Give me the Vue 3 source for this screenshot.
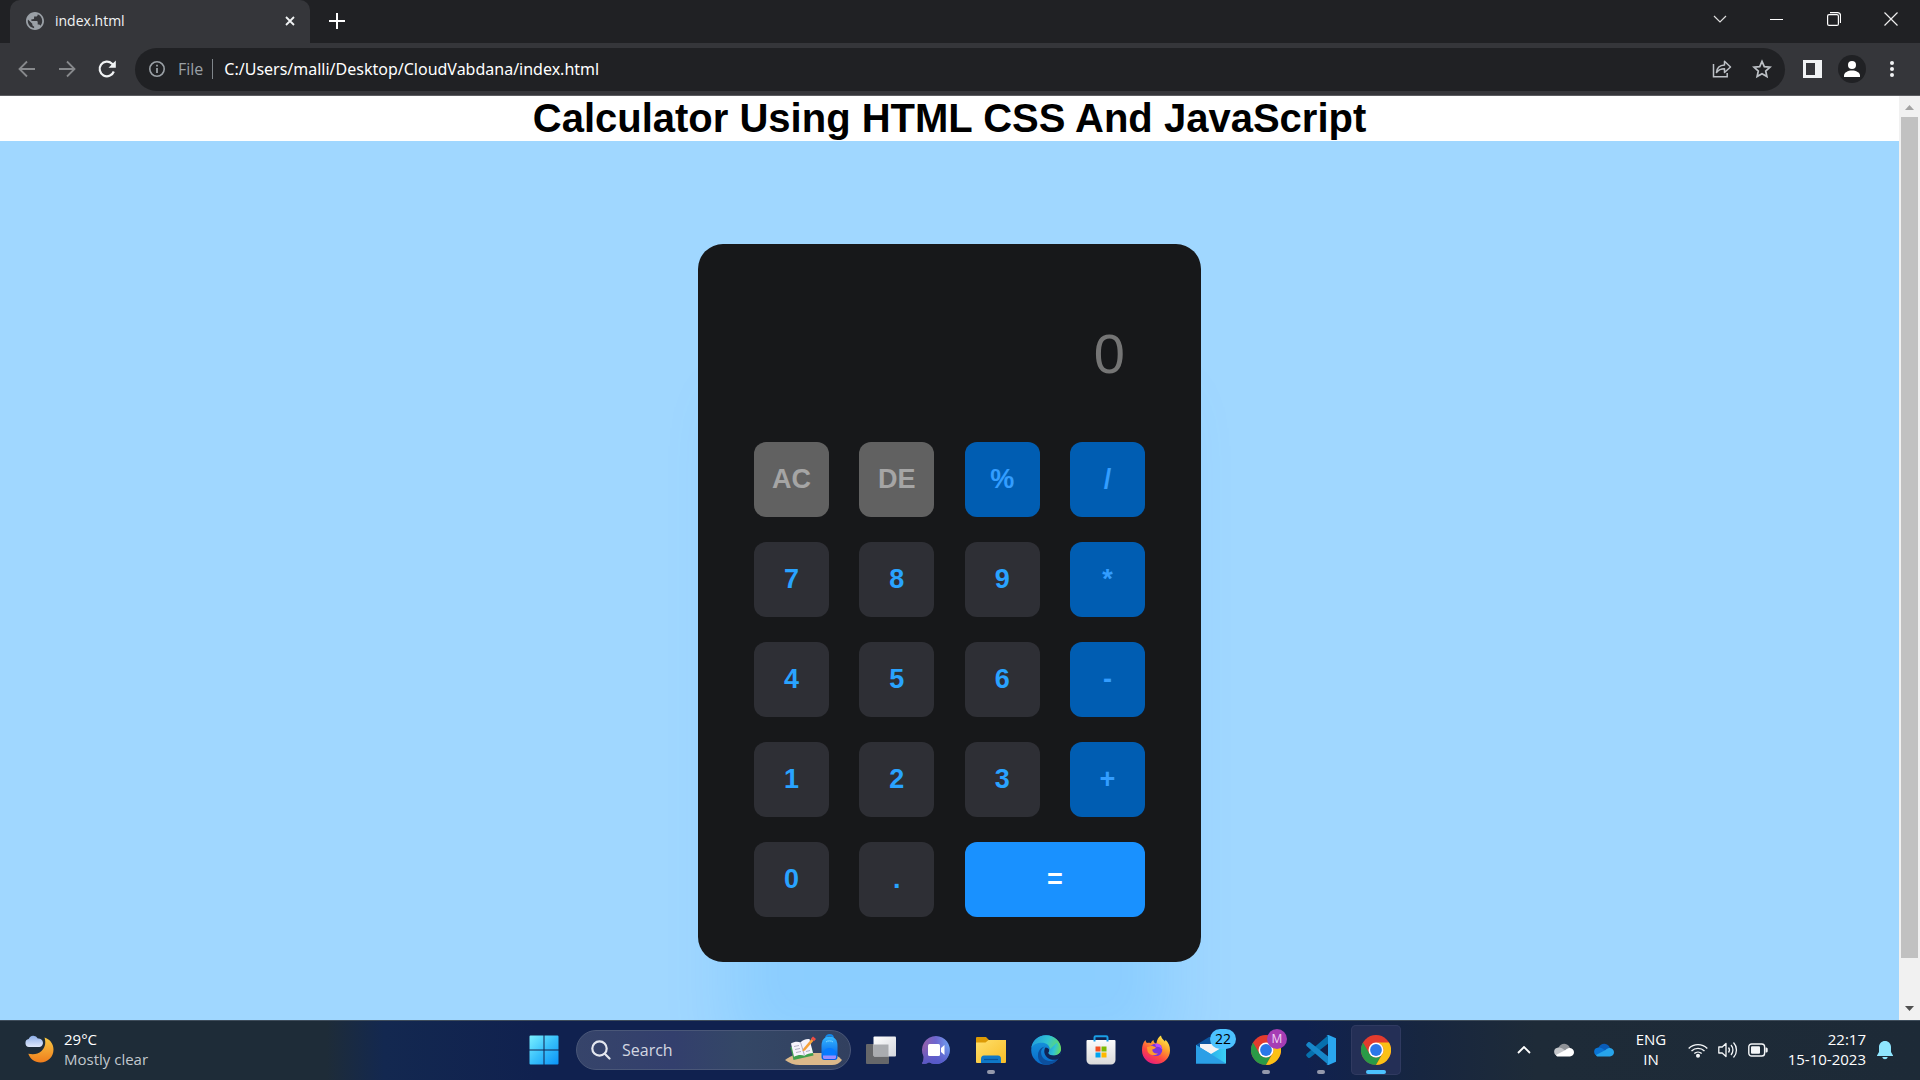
<script setup>
import { ref } from 'vue'

const display = ref('')
const address = ref('C:/Users/malli/Desktop/CloudVabdana/index.html')
const query = ref('')

const keys = [
  { label: 'AC', kind: 'edit' },
  { label: 'DE', kind: 'edit' },
  { label: '%', kind: 'operator' },
  { label: '/', kind: 'operator' },
  { label: '7', kind: 'digit' },
  { label: '8', kind: 'digit' },
  { label: '9', kind: 'digit' },
  { label: '*', kind: 'operator' },
  { label: '4', kind: 'digit' },
  { label: '5', kind: 'digit' },
  { label: '6', kind: 'digit' },
  { label: '-', kind: 'operator' },
  { label: '1', kind: 'digit' },
  { label: '2', kind: 'digit' },
  { label: '3', kind: 'digit' },
  { label: '+', kind: 'operator' },
  { label: '0', kind: 'digit' },
  { label: '.', kind: 'digit' },
  { label: '=', kind: 'equals' },
]

function evaluate(expression) {
  if (!/^[\d.+\-*/% ]+$/.test(expression)) return ''
  try {
    return String(new Function('return ' + expression)())
  } catch {
    return ''
  }
}

function press(label) {
  if (label === 'AC') display.value = ''
  else if (label === 'DE') display.value = display.value.slice(0, -1)
  else if (label === '=') display.value = evaluate(display.value)
  else display.value += label
}
</script>

<template>
  <div class="screen">
    <header class="browser">
      <div class="tabstrip">
        <div class="tab">
          <svg width="18" height="18" viewBox="2 2 20 20">
            <path d="M12 2C6.480 2 2 6.480 2 12s4.480 10 10 10 10-4.480 10-10S17.520 2 12 2zm-1 17.930c-3.950-.490-7-3.850-7-7.930 0-.620.080-1.210.210-1.790L9 15v1c0 1.100.9 2 2 2v1.930zm6.900-2.540c-.260-.810-1-1.390-1.900-1.390h-1v-3c0-.550-.450-1-1-1H8v-2h2c.550 0 1-.450 1-1V7h2c1.100 0 2-.9 2-2v-.410c2.930 1.190 5 4.060 5 7.410 0 2.080-.8 3.970-2.100 5.390z" fill="#9aa0a6" />
          </svg>
          <span class="tab-title">index.html</span>
          <button class="icon tab-close" aria-label="Close tab">
            <svg width="10" height="10" viewBox="0 0 10 10"><path d="M1 1l8 8M9 1L1 9" stroke="#f1f3f4" stroke-width="1.8" /></svg>
          </button>
        </div>
        <button class="icon new-tab" aria-label="New tab">
          <svg width="16" height="16" viewBox="0 0 16 16"><path d="M8 0v16M0 8h16" stroke="#fff" stroke-width="2" /></svg>
        </button>
        <div class="window-controls">
          <button class="icon" aria-label="Search tabs">
            <svg width="14" height="8" viewBox="0 0 14 8"><path d="M1 1l6 6 6-6" fill="none" stroke="#ddd" stroke-width="1.2" /></svg>
          </button>
          <button class="icon" aria-label="Minimize">
            <svg width="14" height="14" viewBox="0 0 14 14"><path d="M0 7.5h13" stroke="#fff" /></svg>
          </button>
          <button class="icon" aria-label="Restore">
            <svg width="14" height="14" viewBox="0 0 14 14" fill="none" stroke="#fff" stroke-width="1.2"><rect x=".6" y="2.6" width="10.8" height="10.8" rx="1.5" /><path d="M3 .6h7.500a3 3 0 0 1 3 3V11" /></svg>
          </button>
          <button class="icon" aria-label="Close window">
            <svg width="14" height="14" viewBox="0 0 14 14"><path d="M.5.5l13 13M13.500.5l-13 13" stroke="#eee" stroke-width="1.2" /></svg>
          </button>
        </div>
      </div>

      <div class="toolbar">
        <button class="icon nav" aria-label="Back">
          <svg width="18" height="18" viewBox="0 0 18 18" fill="none" stroke="#87898c" stroke-width="1.8"><path d="M17 9H2M9 1.500L1.500 9 9 16.500" /></svg>
        </button>
        <button class="icon nav" aria-label="Forward">
          <svg width="18" height="18" viewBox="0 0 18 18" fill="none" stroke="#87898c" stroke-width="1.8"><path d="M1 9h15M9 1.500L16.500 9 9 16.500" /></svg>
        </button>
        <button class="icon nav" aria-label="Reload">
          <svg width="20" height="20" viewBox="0 0 20 20"><path d="M16.800 12.500A7.300 7.300 0 1 1 15 4.700L17.500 7" fill="none" stroke="#f1f3f4" stroke-width="2.2" /><path d="M18.800 1.500v7.300h-7.300z" fill="#f1f3f4" /></svg>
        </button>
        <div class="omnibox">
          <svg width="18" height="18" viewBox="0 0 18 18"><circle cx="9" cy="9" r="7.2" fill="none" stroke="#9aa0a6" stroke-width="1.6" /><path d="M9 8v5M9 4.800v1.800" stroke="#9aa0a6" stroke-width="1.8" /></svg>
          <label class="scheme" for="address">File</label>
          <input id="address" v-model="address" class="address" type="text" spellcheck="false" />
          <button class="icon nav" aria-label="Share">
            <svg width="20" height="20" viewBox="0 0 20 20" fill="none" stroke="#bdc1c6" stroke-width="1.5"><path d="M1.500 5v12.700h13.700V14" /><path d="M4.500 13.500c.4-4.500 3.200-7.300 8-7.500V2.200L18.500 8l-6 5.500V9.800c-3.800 0-6 1-8 3.700z" stroke-linejoin="round" /></svg>
          </button>
          <button class="icon nav" aria-label="Bookmark">
            <svg width="20" height="20" viewBox="0 0 20 20"><path d="M10 2.400l2.300 5.200 5.700.6-4.300 3.800 1.200 5.600L10 14.700l-4.900 2.900L6.300 12 2 8.200l5.700-.6z" fill="none" stroke="#bdc1c6" stroke-width="1.7" /></svg>
          </button>
        </div>
        <button class="icon nav" aria-label="Side panel">
          <svg width="19" height="18" viewBox="0 0 19 18"><path d="M0 0h19v18H0zM3 3v12h9V3z" fill="#f1f3f4" fill-rule="evenodd" /></svg>
        </button>
        <button class="icon nav" aria-label="Profile">
          <svg width="28" height="28" viewBox="0 0 28 28"><circle cx="14" cy="14" r="14" fill="#202124" /><circle cx="14" cy="10" r="4" fill="#fff" /><path d="M6 22v-1.500c0-3 4-5 8-5s8 2 8 5V22z" fill="#fff" /></svg>
        </button>
        <button class="icon nav" aria-label="Menu">
          <svg width="4" height="18" viewBox="0 0 4 18" fill="#f1f3f4"><circle cx="2" cy="3" r="2" /><circle cx="2" cy="9" r="2" /><circle cx="2" cy="15" r="2" /></svg>
        </button>
      </div>
    </header>

    <div class="viewport">
      <main class="page">
        <h1>Calculator Using HTML CSS And JavaScript</h1>
        <section class="stage">
          <form class="calculator" @submit.prevent>
            <input v-model="display" class="display" type="text" placeholder="0" aria-label="Result" />
            <div class="keys">
              <button
                v-for="key in keys"
                :key="key.label"
                type="button"
                class="key"
                :class="key.kind"
                @click="press(key.label)"
              >{{ key.label }}</button>
            </div>
          </form>
        </section>
      </main>
      <div class="scrollbar">
        <svg width="21" height="21" viewBox="0 0 21 21"><path d="M6 14l4.500-5 4.500 5z" fill="#a3a3a3" /></svg>
        <div class="track"><div class="thumb"></div></div>
        <svg width="21" height="21" viewBox="0 0 21 21"><path d="M6 7l4.500 5L15 7z" fill="#505050" /></svg>
      </div>
    </div>

    <footer class="taskbar">
      <button class="weather">
        <svg width="30" height="30" viewBox="0 0 30 30">
          <defs>
            <linearGradient id="moon" x1="0" y1="0" x2="0" y2="1"><stop offset="0" stop-color="#f6c844" /><stop offset="1" stop-color="#f07d1c" /></linearGradient>
            <linearGradient id="cloud" x1="0" y1="0" x2="0" y2="1"><stop offset="0" stop-color="#8fb0ea" /><stop offset="1" stop-color="#dfe8fa" /></linearGradient>
          </defs>
          <path d="M19.500 3.500c5 1.500 9 6 9 12 0 7.500-5.800 13-13 13C9.500 28.500 5 25 3.300 19.800 8 20.800 13 20.500 16.500 17c4-4 4.500-8.500 3-13.500z" fill="url(#moon)" />
          <path d="M4 13a4 4 0 0 1-.3-7.900A5 5 0 0 1 12.800 4.500 4.300 4.300 0 0 1 14.500 13z" fill="url(#cloud)" />
        </svg>
        <span class="two-lines">
          <span>29°C</span>
          <span class="dim">Mostly clear</span>
        </span>
      </button>

      <nav class="apps">
        <button class="app start" aria-label="Start">
          <svg width="30" height="30" viewBox="0 0 30 30">
            <defs><linearGradient id="win" x1="0" y1="0" x2="1" y2="1"><stop offset="0" stop-color="#7bf0ff" /><stop offset=".5" stop-color="#38c0fb" /><stop offset="1" stop-color="#0a93f7" /></linearGradient></defs>
            <path d="M1.500.5H14.500V14.500H.5V1.500a1 1 0 0 1 1-1zM15.500.5H28.500a1 1 0 0 1 1 1V14.500H15.500zM.5 15.500H14.500V29.500H1.500a1 1 0 0 1-1-1zM15.500 15.500H29.500V28.500a1 1 0 0 1-1 1H15.500z" fill="url(#win)" />
          </svg>
        </button>
        <div class="search">
          <svg width="20" height="20" viewBox="0 0 20 20" fill="none" stroke="#e4e7ef" stroke-width="2.2" stroke-linecap="round"><circle cx="8.500" cy="8.500" r="7.2" /><path d="M13.800 13.800l4.700 4.700" /></svg>
          <input v-model="query" type="text" placeholder="Search" aria-label="Search" />
          <svg width="58" height="32" viewBox="0 0 58 32">
            <defs><linearGradient id="bag" x1="0" y1="0" x2="0" y2="1"><stop offset="0" stop-color="#35b7ff" /><stop offset="1" stop-color="#0059e6" /></linearGradient></defs>
            <path d="M0 26C7 21 13 19 23 19h22c5 1 8 3 12 7-2 3-6 5-10 5H15C9 31 4 29 0 26z" fill="#dcb98a" />
            <path d="M5.500 13L8.500 26 28.500 21.500 27 14z" fill="#3fa14d" />
            <path d="M6 9.500c3-2 7-2.500 9.500-1C17.500 6 21 4.500 24.500 5L28 19c-3 0-6 .8-8.500 2.800-3.500-1.300-7-.8-10.500 1z" fill="#f6f3fb" />
            <path d="M15.800 9L19.500 21.500M9 12.500l5-1M10 15.500l5-1M11 18.500l5-1M21 17.500l4-1" stroke="#aaa5bb" stroke-width=".9" />
            <path d="M18 15l8.500-10 2 1.800L20 16.500l-2.500.8z" fill="#f6a13a" /><path d="M26 4.500l2-2 3 2.500-2 2.300z" fill="#f04d43" />
            <path d="M41 4c0-4 7-4 7 0" fill="none" stroke="#1486e8" stroke-width="1.8" />
            <path d="M36.500 12c0-6 3-9.500 8-9.500s8 3.500 8 9.500v11c0 2-1 3-3 3h-10c-2 0-3-1-3-3z" fill="url(#bag)" />
            <path d="M38.500 20c0-4 2.500-6 6-6s6 2 6 6v4h-12z" fill="#087bff" /><path d="M38 21.500h13v2c0 1-1 1.500-2 1.500h-9c-1 0-2-.5-2-1.500z" fill="#9b8dff" />
            <path d="M41 8c1-1.500 6-1.500 7 0" fill="none" stroke="#7bd5ff" />
          </svg>
        </div>
        <button class="app" aria-label="Task view">
          <svg width="30" height="28" viewBox="0 0 30 28">
            <defs><linearGradient id="tv" x1="0" y1="0" x2="1" y2="1"><stop offset="0" stop-color="#fff" /><stop offset="1" stop-color="#d4d6dc" /></linearGradient></defs>
            <rect y="8" width="23" height="20" rx="1" fill="#66676a" /><rect x="7.5" y=".5" width="22.500" height="20" rx="1" fill="url(#tv)" /><path d="M8 8.500h14.500V20H8z" fill="#aaacb0" />
          </svg>
        </button>
        <button class="app" aria-label="Chat">
          <svg width="30" height="30" viewBox="0 0 30 30">
            <defs><linearGradient id="chat" x1="0" y1="0" x2="1" y2="0"><stop offset="0" stop-color="#965fa8" /><stop offset=".5" stop-color="#6d66cf" /><stop offset="1" stop-color="#6fa2f2" /></linearGradient><linearGradient id="chat-low" x1="0" y1="0" x2="0" y2="1"><stop offset=".35" stop-color="#5558c8" stop-opacity="0" /><stop offset="1" stop-color="#5558c8" /></linearGradient></defs>
            <path d="M15 1a14 14 0 1 1-7 26.200C5.500 28.700 3 29 1 28.500c1-1.500 1.800-3.500 1.600-7A14 14 0 0 1 15 1z" fill="url(#chat)" />
            <path d="M15 1a14 14 0 1 1-7 26.200C5.500 28.700 3 29 1 28.500c1-1.500 1.800-3.500 1.600-7A14 14 0 0 1 15 1z" fill="url(#chat-low)" />
            <rect x="7" y="9" width="12" height="12" rx="1.5" fill="#fff" /><path d="M20 13l3.500-3v10L20 17z" fill="#fff" />
          </svg>
        </button>
        <button class="app running" aria-label="File Explorer">
          <svg width="30" height="28" viewBox="0 0 30 28">
            <defs><linearGradient id="folder" x1="0" y1="0" x2="1" y2="1"><stop offset="0" stop-color="#ffdf6b" /><stop offset="1" stop-color="#f8bd27" /></linearGradient></defs>
            <path d="M0 2a1 1 0 0 1 1-1h9l3 3h16a1 1 0 0 1 1 1v8H0z" fill="#dd9a05" /><path d="M0 6.500h9.500l3-2.500H30V26a1 1 0 0 1-1 1H1a1 1 0 0 1-1-1z" fill="url(#folder)" /><path d="M5 27v-4c0-2 1-3.500 3-3.500h14c2 0 3 1.500 3 3.500v4z" fill="#0f78c8" /><path d="M8 23.500h14" stroke="#08539b" stroke-width="1.2" />
          </svg>
        </button>
        <button class="app" aria-label="Edge">
          <svg width="30" height="30" viewBox="0 0 30 30">
            <defs><linearGradient id="edge-top" x1="0" y1=".3" x2="1" y2=".6"><stop offset="0" stop-color="#219cdc" /><stop offset=".5" stop-color="#31c4d3" /><stop offset="1" stop-color="#6bdf55" /></linearGradient><linearGradient id="edge-side" x1="0" y1="0" x2="0" y2="1"><stop offset="0" stop-color="#199be0" /><stop offset="1" stop-color="#0869c8" /></linearGradient></defs>
            <circle cx="15" cy="15" r="14.8" fill="url(#edge-side)" />
            <path d="M.3 13C1.500 5 7.500.2 15 .2 24 .2 30 7 30 13.500c0 4-3 6.800-7.200 6.800-3.500 0-5.300-1.200-5.300-2.200 0-.8 1.300-1.500 1.300-3.900 0-3.800-3.500-6.500-8-6.500C6 7.700 2 9.500.3 13z" fill="url(#edge-top)" />
            <path d="M14 11.500c-3 1.500-4.500 4-3.800 7.500 1 5.200 6.300 8 11.500 6.800 2.500-.6 4-1.600 5.800-2.600-2.300 4-7 6.800-12.500 6.600C10 29.500 6.500 25 7 19.500c.3-4 3-7.300 7-8z" fill="#0c4f9d" />
            <path d="M18.300 16c-.8 1.300-1 2-.3 3 1 1.200 3 1.500 5 1.300 3-.2 6-1.500 6.800-5C30 19 29 22.500 26.800 24c-3 1.500-7.800 1-10.600-1.500C13 19.700 12.500 15 14.500 12.500c2 0 4 1.500 3.800 3.500z" fill="#112556" />
            <path d="M18.600 14.500c0 1.500-1.100 2.800-1.100 3.600 0 1 1.800 2.200 5.300 2.200 4.200 0 7.200-2.800 7.200-6.800l-4-6z" fill="url(#edge-top)" />
          </svg>
        </button>
        <button class="app" aria-label="Store">
          <svg width="30" height="30" viewBox="0 0 30 30">
            <defs><linearGradient id="store" x1="0" y1="0" x2="0" y2="1"><stop offset="0" stop-color="#fbfbfb" /><stop offset="1" stop-color="#dadada" /></linearGradient></defs>
            <path d="M1.500 5h27a1 1 0 0 1 1 1v19a4.500 4.500 0 0 1-4.500 4.500H5A4.500 4.500 0 0 1 .5 25V6a1 1 0 0 1 1-1z" fill="url(#store)" /><path d="M8.500 6.500V2.500a1.200 1.200 0 0 1 1.200-1.200h10.600a1.200 1.200 0 0 1 1.200 1.200V6.500" fill="none" stroke="#1a9fe6" stroke-width="2" />
            <path d="M9.500 11.500h5v5h-5z" fill="#f25022" /><path d="M15.500 11.500h5v5h-5z" fill="#7fba00" /><path d="M9.500 17.500h5v5h-5z" fill="#00a4ef" /><path d="M15.500 17.500h5v5h-5z" fill="#ffb900" />
          </svg>
        </button>
        <button class="app" aria-label="Firefox">
          <svg width="30" height="30" viewBox="0 0 30 30">
            <defs><linearGradient id="fox" x1=".8" y1="0" x2=".2" y2="1"><stop offset="0" stop-color="#fff44f" /><stop offset=".35" stop-color="#ffa02c" /><stop offset=".65" stop-color="#ff4a40" /><stop offset="1" stop-color="#e31587" /></linearGradient></defs>
            <path d="M4.500 5c.2 1.500.7 2.200 1.500 3 1.300-.3 2.600-.2 4 .2C10.200 7 11 6 12.500 5c0 1.500.5 2.500 2 3.500l1-.5C16 4.500 17.500 2 20 .5c.3 2.500 2 4 4 6l.5-1.800C27.500 7.500 29 11 29 15.500 29 23 23 29 15 29S1 23 1 15.500C1 11 2 7.500 4.500 5z" fill="url(#fox)" />
            <circle cx="15" cy="14.800" r="6.300" fill="#7a35dd" /><path d="M14 9c4-1 7 1.500 7 5.500-2-2.500-4-3-6-2.500z" fill="#b44cff" />
            <path d="M6 12c2 0 3.500-1.500 5-1.300 1.200.2 2.300 1 4 1.500-.5 1.300-2.500 1.800-3.800 2.300.3 3 2.800 4.500 6 3.800-2.500 3.200-9 2.200-10.700-2z" fill="#ff9a2e" />
          </svg>
        </button>
        <button class="app" aria-label="Mail, 22 unread">
          <svg width="30" height="30" viewBox="0 0 30 30">
            <defs><linearGradient id="mail" x1="0" y1="0" x2="1" y2="0"><stop offset="0" stop-color="#1b94e0" /><stop offset="1" stop-color="#3bd0f5" /></linearGradient></defs>
            <path d="M0 10L13 2h5l12 8v6H0z" fill="#0b55a0" /><path d="M4 9h22v5l-11 7-11-7z" fill="#f3f3f5" /><path d="M0 10l15 9 15-9v18.500H0z" fill="url(#mail)" /><path d="M0 10l30 18.500H0z" fill="#2b9fe6" />
          </svg>
          <span class="count">22</span>
        </button>
        <button class="app running" aria-label="Chrome, profile M">
          <svg width="30" height="30" viewBox="0 0 30 30">
            <g id="chrome">
              <circle cx="15" cy="15" r="15" fill="#e33b2e" />
              <path d="M2 7.500L8.500 18.700A7.500 7.500 0 0 0 21.500 18.700L15 30A15 15 0 0 1 2 7.500z" fill="#2a9a47" />
              <path d="M28 7.500A15 15 0 0 1 15 30L21.500 18.700A7.500 7.500 0 0 0 15 7.500z" fill="#fbc116" />
              <circle cx="15" cy="15" r="7.500" fill="#fff" /><circle cx="15" cy="15" r="5.900" fill="#2b77e8" />
            </g>
          </svg>
          <span class="profile">M</span>
        </button>
        <button class="app running" aria-label="Visual Studio Code">
          <svg width="30" height="30" viewBox="0 0 30 30">
            <path d="M.8 18.800L22.500 0v8.300L4 22.700c-.6.500-1.300.5-1.900 0L.7 21.300c-.7-.7-.7-1.700.1-2.500z" fill="#0670ad" />
            <path d="M.8 11.200L22.500 30v-8.300L4 7.300c-.6-.5-1.300-.5-1.900 0L.7 8.700c-.7.700-.7 1.700.1 2.500z" fill="#1787ca" />
            <path d="M22.500 0L30 3.200v23.600L22.500 30c-1 .3-2-.3-2.300-.8.8.6 1.800 0 1.800-1V1.800c0-1-1-1.600-1.800-1 .4-.6 1.300-1 2.300-.8z" fill="#2aa6ee" />
          </svg>
        </button>
        <button class="app running active" aria-label="Chrome">
          <svg width="30" height="30" viewBox="0 0 30 30"><use href="#chrome" /></svg>
        </button>
      </nav>

      <div class="tray">
        <button class="icon tray-icon" aria-label="Hidden icons">
          <svg width="14" height="8" viewBox="0 0 14 8"><path d="M1 7l6-6 6 6" fill="none" stroke="#fff" stroke-width="1.8" /></svg>
        </button>
        <button class="icon tray-icon" aria-label="OneDrive personal">
          <svg width="20" height="14" viewBox="0 0 20 14"><path d="M4.500 5C6 1 10 0 13 1.500c1.600.8 2.500 2 3 3.500L10 9z" fill="#8f9297" /><path d="M4 13a4.200 4.200 0 0 1-.5-8.300C6 4 8 5 12 8l4 5z" fill="#c4c6ca" /><path d="M2 12l9.500-5c1.500-1.500 3-2 4.500-2 2.500.3 4 2 4 4.300S18 13.500 16 13.500H4C3 13.500 2.500 13 2 12z" fill="#fff" /></svg>
        </button>
        <button class="icon tray-icon" aria-label="OneDrive">
          <svg width="20" height="14" viewBox="0 0 20 14"><path d="M4.500 5C6 1 10 0 13 1.500c1.600.8 2.500 2 3 3.500L10 9z" fill="#0a5cb8" /><path d="M4 13a4.200 4.200 0 0 1-.5-8.300C6 4 8 5 12 8l4 5z" fill="#0a74d4" /><path d="M2 12l9.500-5c1.500-1.500 3-2 4.500-2 2.500.3 4 2 4 4.300S18 13.500 16 13.500H4C3 13.500 2.500 13 2 12z" fill="#27a4ea" /></svg>
        </button>
        <button class="language"><span>ENG</span><span>IN</span></button>
        <button class="quick" aria-label="Network, volume and battery">
          <svg width="20" height="16" viewBox="0 0 20 16" fill="none" stroke="#f4f6f8" stroke-width="1.4"><path d="M.7 6.500a13 13 0 0 1 18.600 0M3.500 9a9.300 9.300 0 0 1 13 0M6.300 11.600a5.400 5.400 0 0 1 7.400 0" /><circle cx="10" cy="13.700" r="1.300" fill="#f4f6f8" /></svg>
          <svg width="20" height="18" viewBox="0 0 20 18" fill="none" stroke="#f4f6f8" stroke-width="1.3"><path d="M.8 6h3.400L8 2.500v13L4.200 12H.8z" stroke-linejoin="round" /><path d="M10.500 6.500a4 4 0 0 1 0 5M13 4a7.500 7.500 0 0 1 0 10M15.500 1.500a11 11 0 0 1 0 15" /></svg>
          <svg width="20" height="14" viewBox="0 0 20 14"><rect x=".8" y="1" width="15.800" height="12" rx="2.8" fill="none" stroke="#f4f6f8" stroke-width="1.4" /><rect x="3" y="3.300" width="9" height="7.400" rx="1" fill="#f4f6f8" /><path d="M17.500 4.500c1.500 0 2.200.5 2.200 1.500v2c0 1-.7 1.500-2.200 1.500z" fill="#f4f6f8" /></svg>
        </button>
        <button class="clock"><span>22:17</span><span>15-10-2023</span></button>
        <button class="icon bell" aria-label="Notifications">
          <svg width="16" height="20" viewBox="0 0 16 20" fill="#8fe6ff"><path d="M8 1c3.500 0 6 2.700 6 6v5l2 3.500v.5H0v-.5L2 12V7c0-3.300 2.500-6 6-6zM5.300 17h5.400c-.4 1.500-1.300 2.200-2.700 2.200S5.700 18.500 5.300 17z" /></svg>
        </button>
      </div>
    </footer>
  </div>
</template>

<style>
body {
  margin: 0;
}
</style>

<style scoped>
* {
  box-sizing: border-box;
}

.screen {
  display: flex;
  flex-direction: column;
  min-height: 100vh;
  font-family: "Open Sans", "Noto Sans", sans-serif;
}

button,
input {
  margin: 0;
  padding: 0;
  border: 0;
  outline: 0;
  background: none;
  color: inherit;
  font-family: inherit;
}

svg {
  display: block;
  flex: none;
}

.icon {
  display: flex;
  align-items: center;
  justify-content: center;
}

/* Browser window */
.browser {
  background: #35363a;
  border-bottom: 1px solid #5b5c60;
}

.tabstrip {
  display: flex;
  height: 43px;
  padding-left: 10px;
  background: #202124;
}

.tab {
  display: flex;
  align-items: center;
  width: 300px;
  padding: 0 10px 2px 16px;
  border-radius: 10px 10px 0 0;
  background: #35363a;
  color: #f1f3f4;
}

.tab-title {
  flex: 1;
  padding-left: 11px;
  font-size: 14px;
}

.tab-close {
  width: 20px;
  height: 20px;
}

.new-tab {
  width: 36px;
  height: 42px;
  margin-left: 9px;
}

.window-controls {
  display: flex;
  margin-left: auto;
  padding-right: 1px;
}

.window-controls .icon {
  width: 57px;
  height: 37px;
}

.toolbar {
  display: flex;
  align-items: center;
  height: 52px;
  padding: 0 8px 0 7px;
}

.nav {
  width: 40px;
  height: 40px;
}

.omnibox {
  display: flex;
  flex: 1;
  align-items: center;
  height: 43px;
  margin: 0 7px 0 8px;
  padding: 0 3px 0 13px;
  border-radius: 22px;
  background: #202124;
  font-size: 16px;
}

.scheme {
  margin-left: 12px;
  padding-right: 9px;
  border-right: 1px solid #80868b;
  color: #9aa0a6;
  line-height: 20px;
}

.address {
  flex: 1;
  min-width: 0;
  padding-left: 11px;
  color: #fff;
  font-family: "Noto Sans", sans-serif;
  font-size: 16px;
}

/* Web page */
.viewport {
  display: flex;
  flex: 1;
}

.page {
  display: flex;
  flex: 1;
  flex-direction: column;
  overflow: hidden;
  background: #fff;
  font-family: "Liberation Sans", Arial, sans-serif;
}

h1 {
  margin: 0;
  color: #000;
  font-size: 40px;
  line-height: 45px;
  text-align: center;
}

.stage {
  display: flex;
  flex: 1;
  align-items: flex-start;
  justify-content: center;
  padding: 103px 20px 58px;
  background: #a0d7ff;
}

.calculator {
  width: 503px;
  padding: 45px 56px;
  border-radius: 25px;
  background: #17181a;
  box-shadow: 0 125px 62px -31px rgba(0, 146, 255, 0.13);
}

.display {
  display: block;
  width: 100%;
  height: 128px;
  margin-bottom: 25px;
  padding-right: 20px;
  color: #fff;
  font-size: 56px;
  text-align: right;
}

.display::placeholder {
  color: #757575;
}

.keys {
  display: grid;
  grid-template-columns: repeat(4, 75px);
  justify-content: space-between;
  row-gap: 25px;
}

.key {
  height: 75px;
  border-radius: 12px;
  font-size: 27px;
  font-weight: 700;
}

.edit {
  background: #616161;
  color: #a5a5a5;
}

.digit {
  background: #2e2f35;
  color: #29a3ff;
}

.operator {
  background: #005db2;
  color: #339dff;
}

.equals {
  grid-column: span 2;
  background: #1991ff;
  color: #fff;
}

.scrollbar {
  display: flex;
  flex-direction: column;
  width: 21px;
  background: #f1f1f1;
}

.track {
  display: flex;
  flex: 1;
  padding: 0 2px 41px;
}

.thumb {
  flex: 1;
  background: #c1c1c1;
}

/* Taskbar */
.taskbar {
  display: grid;
  grid-template-columns: 1fr auto 1fr;
  align-items: center;
  height: 60px;
  box-shadow: inset 0 1px #3f4d5b;
  background: linear-gradient(90deg, #1e2c38 0, #1e2c38 17%, #132850 20%, #10214f 28%, #10214f 68%, #172640 74%, #1e2b38 80%, #1d2a37 100%);
  color: #fff;
}

.weather {
  display: flex;
  align-items: center;
  justify-self: start;
  gap: 9px;
  padding: 0 0 2px 25px;
  text-align: left;
}

.two-lines,
.language,
.clock {
  font-size: 15px;
  line-height: 20px;
}

.language,
.clock {
  padding-bottom: 2px;
}

.two-lines > span,
.language > span,
.clock > span {
  display: block;
}

.dim {
  color: #c2c8ce;
}

.apps {
  display: flex;
  align-items: center;
  gap: 5px;
}

.app {
  position: relative;
  display: flex;
  align-items: center;
  justify-content: center;
  width: 50px;
  height: 50px;
  border-radius: 5px;
}

.start {
  margin-right: 2px;
}

.running::after {
  position: absolute;
  bottom: 1px;
  left: 21px;
  width: 8px;
  height: 4px;
  border-radius: 2px;
  background: #9499ac;
  content: "";
}

.active {
  background: #242f56;
  box-shadow: inset 0 0 0 1px #303a60;
}

.active::after {
  left: 15px;
  width: 20px;
  background: #4cc2ff;
}

.search {
  display: flex;
  align-items: center;
  width: 275px;
  height: 40px;
  padding: 0 7px 0 14px;
  border: 1px solid #4a5778;
  border-radius: 20px;
  background: linear-gradient(90deg, #36446a, #333f6d 35%, #344766 60%, #32405f);
}

.search input {
  flex: 1;
  min-width: 0;
  padding-left: 11px;
  font-size: 16px;
}

.search input::placeholder {
  color: #d3d7e1;
}

.count {
  position: absolute;
  top: 4px;
  right: 0;
  width: 26px;
  border-radius: 10px;
  background: #4cc2ff;
  color: #000;
  font-size: 14px;
  line-height: 20px;
  text-align: center;
}

.profile {
  position: absolute;
  top: 4px;
  right: 4px;
  width: 20px;
  border-radius: 10px;
  background: #a63db4;
  color: #f0d5f4;
  font-size: 12px;
  line-height: 20px;
  text-align: center;
}

.tray {
  display: flex;
  align-items: center;
  justify-self: end;
  padding-right: 16px;
}

.tray-icon {
  width: 40px;
  height: 40px;
}

.language {
  width: 54px;
  text-align: center;
}

.quick {
  display: flex;
  align-items: center;
  gap: 10px;
  padding: 0 10px;
}

.clock {
  width: 88px;
  text-align: right;
}

.bell {
  width: 38px;
  height: 40px;
}
</style>
